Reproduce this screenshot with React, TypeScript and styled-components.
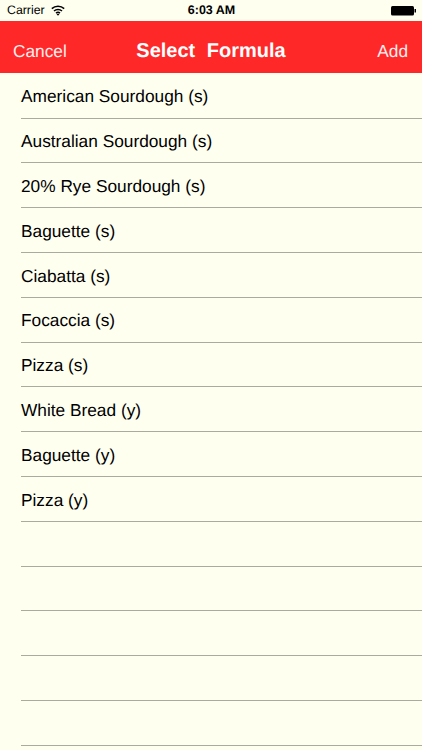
import styled, { createGlobalStyle } from "styled-components";

const GlobalStyle = createGlobalStyle`
    html, body {
        margin: 0;
        padding: 0;
        background-color: #fffff0;
        text-rendering: geometricPrecision;
    }
`;

const Screen = styled.div`
    width: 422px;
    height: 750px;
    overflow: hidden;
    background-color: #fffff0;
    font-family: "Liberation Sans", Arial, sans-serif;
    display: flex;
    flex-direction: column;
`;

const StatusBar = styled.div`
    height: 20.5px;
    flex-shrink: 0;
    display: grid;
    grid-template-columns: 1fr auto 1fr;
    align-items: center;
    padding: 0 6px 0 7px;
    font-size: 12.3px;
    color: #000;
`;

const StatusLeft = styled.div`
    display: flex;
    align-items: center;
    gap: 6px;
`;

const Clock = styled.div`
    font-weight: bold;
    font-size: 12.5px;
`;

const StatusRight = styled.div`
    display: flex;
    justify-content: flex-end;
`;

const NavBar = styled.div`
    height: 52.7px;
    flex-shrink: 0;
    background-color: #ff2828;
    color: #fff;
    display: flex;
    align-items: center;
    justify-content: space-between;
    padding: 9px 14px 0 13px;
    box-sizing: border-box;
    position: relative;
`;

const NavButton = styled.div`
    font-size: 17.3px;
    color: #ffeeee;
`;

const NavTitle = styled.div`
    position: absolute;
    left: 0;
    right: 0;
    top: 19px;
    text-align: center;
    font-size: 20px;
    font-weight: bold;
    word-spacing: 6px;
    pointer-events: none;
`;

const List = styled.div`
    display: flex;
    flex-direction: column;
    padding: 0.6px 0 0 21px;
`;

const Row = styled.div`
    height: 44.8px;
    box-sizing: border-box;
    flex-shrink: 0;
    display: flex;
    align-items: center;
    padding-top: 2.5px;
    font-size: 17.3px;
    color: #000;
    border-bottom: 1px solid #aaaa9f;
`;

const formulas = [
    "American Sourdough (s)",
    "Australian Sourdough (s)",
    "20% Rye Sourdough (s)",
    "Baguette (s)",
    "Ciabatta (s)",
    "Focaccia (s)",
    "Pizza (s)",
    "White Bread (y)",
    "Baguette (y)",
    "Pizza (y)",
    "",
    "",
    "",
    "",
    "",
];

function WifiIcon() {
    return (
        <svg width="14" height="11" viewBox="0 0 14 11" fill="none" stroke="#000" strokeWidth="1.5">
            <path d="M0.8 3.6C4.2 0.4 9.8 0.4 13.2 3.6" />
            <path d="M3 6C5.2 4 8.8 4 11 6" />
            <path d="M5 8.1C6.2 7.1 7.8 7.1 9 8.1" />
            <path d="M7 10.8L5.6 9.2C6.4 8.6 7.6 8.6 8.4 9.2Z" fill="#000" stroke="none" />
        </svg>
    );
}

function BatteryIcon() {
    return (
        <svg width="25" height="11" viewBox="0 0 25 11">
            <rect x="0" y="1" width="23" height="9.5" rx="1.5" fill="#000" />
            <rect x="23.5" y="4" width="1.5" height="3.5" fill="#000" />
        </svg>
    );
}

export default function App() {
    return (
        <>
            <GlobalStyle />
            <Screen>
                <StatusBar>
                    <StatusLeft>
                        Carrier
                        <WifiIcon />
                    </StatusLeft>
                    <Clock>6:03 AM</Clock>
                    <StatusRight>
                        <BatteryIcon />
                    </StatusRight>
                </StatusBar>
                <NavBar>
                    <NavButton>Cancel</NavButton>
                    <NavTitle>Select Formula</NavTitle>
                    <NavButton>Add</NavButton>
                </NavBar>
                <List>
                    {formulas.map((name, i) => (
                        <Row key={i}>{name}</Row>
                    ))}
                </List>
            </Screen>
        </>
    );
}
